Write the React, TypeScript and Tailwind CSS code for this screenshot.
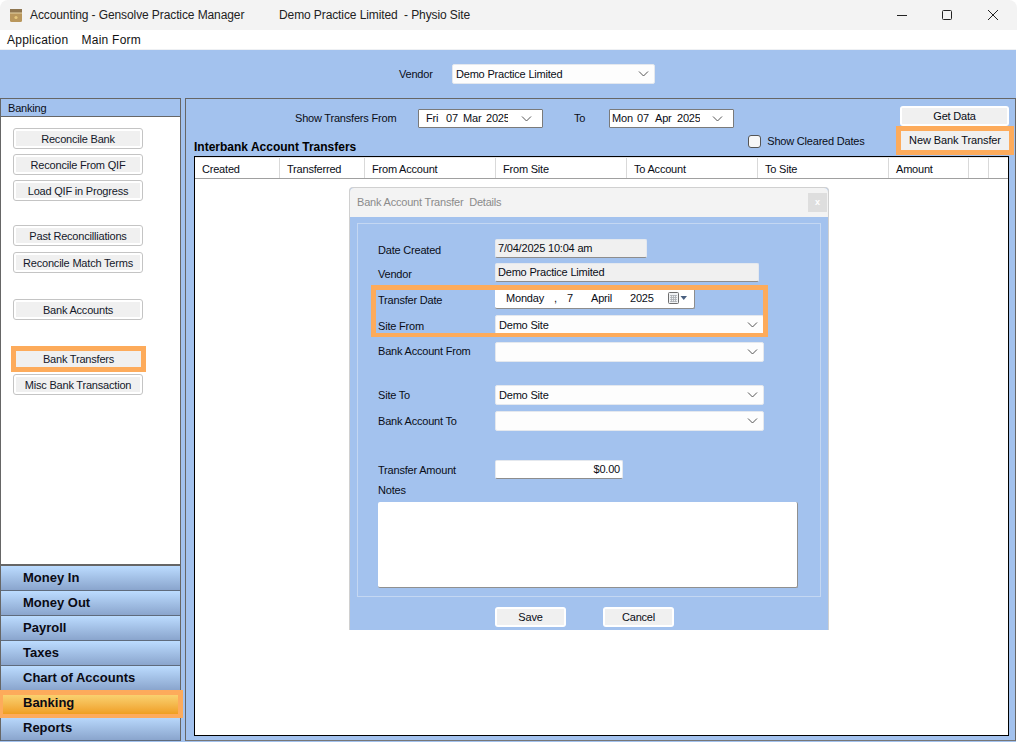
import React from "react";

const Chev = () => (
  <svg width="11" height="6" viewBox="0 0 11 6" className="shrink-0" fill="none" stroke="#555" strokeWidth="1">
    <path d="M1 0.5 L5.5 5 L10 0.5" />
  </svg>
);

const SideBtn = ({ label, mt = "" }: { label: string; mt?: string }) => (
  <div className={`w-[130px] h-[21px] ml-[12px] rounded-[3px] border border-[#c4c4c4] bg-white p-[2px] ${mt}`}>
    <div className="h-full bg-[#f0f0f0] flex items-center justify-center pt-[1px]">{label}</div>
  </div>
);

const BlueBtn = ({ label, cls = "" }: { label: string; cls?: string }) => (
  <div className={`h-[20px] rounded-[3px] bg-white p-[2px] ${cls}`}>
    <div className="h-full bg-[#f0f0f0] flex items-center justify-center">{label}</div>
  </div>
);

const Nav = ({ label, active }: { label: string; active?: boolean }) => (
  <div
    className={`h-[25px] flex items-center pl-[22px] pb-[1px] text-[13px] tracking-normal font-bold border-b border-[#5f6b7c] text-[#0a0a14] ${
      active ? "bg-gradient-to-b from-[#fbdc7c] to-[#ee9c16]" : "bg-gradient-to-b from-[#bcdcff] to-[#8aa5cd]"
    }`}
  >
    {label}
  </div>
);

const Select = ({ value, cls = "" }: { value?: string; cls?: string }) => (
  <div className={`h-[20px] bg-[#fdfdfd] border border-[#e4e8ee] rounded-[2px] flex items-center justify-between pl-[3px] pr-[5px] ${cls}`}>
    <span>{value}</span>
    <Chev />
  </div>
);

const Row = ({ label, cls = "", pt, children }: { label: string; cls?: string; pt: string; children: React.ReactNode }) => (
  <div className={`flex items-start ${cls}`}>
    <div className={`w-[117px] shrink-0 ${pt}`}>{label}</div>
    {children}
  </div>
);

const cols: [string, string][] = [
  ["Created", "w-[85px]"],
  ["Transferred", "w-[85px]"],
  ["From Account", "w-[131px]"],
  ["From Site", "w-[131px]"],
  ["To Account", "w-[131px]"],
  ["To Site", "w-[131px]"],
  ["Amount", "w-[80px]"],
  ["", "w-[20px]"],
  ["", "flex-1"],
];

export default function App() {
  return (
    <div
      className="relative w-[1017px] h-[742px] overflow-hidden bg-white flex flex-col text-[11px] leading-none text-[#0a0d16] tracking-[-0.2px]"
      style={{ fontFamily: '"Liberation Sans", Arial, sans-serif' }}
    >
      {/* title bar */}
      <div className="h-[30px] bg-[#f3f3f3] rounded-t-[8px] flex items-center shrink-0 text-[#222] text-[12px] tracking-[-0.1px]">
        <svg width="14" height="15" viewBox="0 0 14 15" className="ml-[9px] mr-[7px]">
          <rect x="1" y="1" width="12" height="13" rx="1.5" fill="#b9975c" />
          <rect x="1" y="1" width="12" height="4" fill="#8f7650" />
          <rect x="1" y="4.5" width="12" height="1" fill="#e6d3a6" />
          <circle cx="7" cy="9.5" r="1.6" fill="#e5c77e" />
        </svg>
        <span className="w-[249px]">Accounting - Gensolve Practice Manager</span>
        <span>Demo Practice Limited&nbsp; - Physio Site</span>
        <div className="ml-auto flex items-center">
          <svg width="12" height="12" viewBox="0 0 12 12" className="mr-[33px]" stroke="#222" fill="none">
            <path d="M1 6.5 H11" />
          </svg>
          <svg width="12" height="12" viewBox="0 0 12 12" className="mr-[34px]" stroke="#222" fill="none">
            <rect x="1.5" y="1.5" width="9" height="9" rx="1" />
          </svg>
          <svg width="12" height="12" viewBox="0 0 12 12" className="mr-[18px]" stroke="#222" fill="none">
            <path d="M1 1 L11 11 M11 1 L1 11" />
          </svg>
        </div>
      </div>

      {/* menu */}
      <div className="h-[19px] flex items-center shrink-0 pl-[7px] gap-[13px] text-[#111] text-[12px] tracking-[0.25px]">
        <span>Application</span>
        <span>Main Form</span>
      </div>
      <div className="h-px bg-[#eef0f3] shrink-0 mr-px" />

      {/* vendor band */}
      <div className="h-[48px] bg-[#a3c2ee] flex items-center shrink-0 mr-px">
        <span className="ml-[399px] w-[53px]">Vendor</span>
        <Select value="Demo Practice Limited" cls="w-[203px]" />
      </div>

      {/* body */}
      <div className="flex-1 flex bg-[#a3c2ee] mr-px pb-px min-h-0">
        {/* left panel */}
        <div className="w-[181px] shrink-0 border border-[#666] border-b-0 flex flex-col">
          <div className="h-[18px] border-b border-[#666] bg-[#a3c2ee] flex items-center pl-[7px] pt-[1px] shrink-0">Banking</div>
          <div className="flex-1 bg-white flex flex-col pt-[11px] text-[#14182a]">
            <SideBtn label="Reconcile Bank" />
            <SideBtn label="Reconcile From QIF" mt="mt-[5px]" />
            <SideBtn label="Load QIF in Progress" mt="mt-[5px]" />
            <SideBtn label="Past Reconcilliations" mt="mt-[24px]" />
            <SideBtn label="Reconcile Match Terms" mt="mt-[6px]" />
            <SideBtn label="Bank Accounts" mt="mt-[26px]" />
            <div className="w-[135px] h-[26px] ml-[10px] mt-[26px] border-[5px] border-[#fdab5b] bg-[#f0f0f0] flex items-center justify-center">
              Bank Transfers
            </div>
            <SideBtn label="Misc Bank Transaction" mt="mt-[2px]" />
          </div>
          <div className="shrink-0 border-t-[2px] border-[#666]">
            {["Money In", "Money Out", "Payroll", "Taxes", "Chart of Accounts"].map((l) => (
              <Nav key={l} label={l} />
            ))}
            <Nav label="Banking" active />
            <Nav label="Reports" />
          </div>
        </div>

        {/* main panel */}
        <div className="ml-[4px] flex-1 border border-[#666] border-b-[#777] flex flex-col min-w-0 pr-[6px] pl-[8px]">
          <div className="h-[57px] shrink-0 relative flex flex-col">
            <div className="flex items-center mt-[10px] h-[19px]">
              <span className="ml-[101px] w-[123px]">Show Transfers From</span>
              <div className="w-[125px] h-[19px] bg-white border border-[#7a7a7a] flex items-center pl-[7px] pr-[10px] rounded-[1px]">
                <span className="w-[20px]">Fri</span>
                <span className="w-[17px]">07</span>
                <span className="w-[23px]">Mar</span>
                <span className="w-[22px] overflow-hidden">2025</span>
                <span className="ml-auto"><Chev /></span>
              </div>
              <span className="ml-[31px] w-[35px]">To</span>
              <div className="w-[125px] h-[19px] bg-white border border-[#7a7a7a] flex items-center pl-[2px] pr-[10px] rounded-[1px]">
                <span className="w-[25px]">Mon</span>
                <span className="w-[18px]">07</span>
                <span className="w-[22px]">Apr</span>
                <span className="w-[23px] overflow-hidden">2025</span>
                <span className="ml-auto"><Chev /></span>
              </div>
              <BlueBtn label="Get Data" cls="ml-auto w-[109px] mt-[-5px]" />
            </div>
            <div className="flex items-end flex-1 pb-[3px]">
              <span className="font-bold text-[12px] tracking-normal text-[#000]">Interbank Account Transfers</span>
              <div className="ml-[392px] mb-[5px] w-[13px] h-[13px] rounded-[3px] border border-[#555] bg-[#f7f7f7]" />
              <span className="ml-[6px] mb-[6px]">Show Cleared Dates</span>
            </div>
            {/* highlighted button over the toolbar */}
            <div className="absolute right-[-5px] top-[27px] w-[118px] h-[29px] border-[5px] border-[#fdab5b] bg-[#f0f0f0] flex items-center justify-center tracking-[-0.1px]">
              New Bank Transfer
            </div>
          </div>

          {/* table */}
          <div className="flex-1 bg-white border border-black flex flex-col mb-[4px] min-h-0">
            <div className="h-[22px] flex shrink-0 border-b border-[#a0a0a0] border-t border-t-[#e8e8e8]">
              {cols.map(([t, w], i) => (
                <div key={i} className={`${w} flex items-center pl-[7px] pt-[2px] border-r border-[#d9d9d9] last:border-r-0`}>
                  {t}
                </div>
              ))}
            </div>
          </div>
        </div>
      </div>

      {/* dialog */}
      <div className="absolute left-[349px] top-[187px] w-[480px] h-[443px] flex flex-col bg-[#a3c2ee] rounded-t-[4px] border-t border-x border-[#d0d0d0] border-b-0">
        <div className="h-[29px] shrink-0 bg-[#f3f3f3] rounded-t-[4px] flex items-center pl-[7px] pr-[1px] pb-[1px] justify-between text-[#8b8b8b]">
          <span>Bank Account Transfer&nbsp; Details</span>
          <div className="w-[19px] h-[19px] bg-[#dedede] text-white flex items-center justify-center text-[9px] font-bold">x</div>
        </div>
        <div className="mx-[7px] mt-[6px] h-[374px] border border-[#c4d7f2] pl-[20px] flex flex-col shrink-0">
          <Row label="Date Created" cls="mt-[15px]" pt="pt-[6px]">
            <div className="w-[152px] h-[19px] bg-[#f0f0f0] border border-[#e4e8ee] border-b-[#8d8d8d] flex items-center pl-[2px] rounded-[2px]">7/04/2025 10:04 am</div>
          </Row>
          <Row label="Vendor" cls="mt-[5px]" pt="pt-[6px]">
            <div className="w-[264px] h-[19px] bg-[#f0f0f0] border border-[#e4e8ee] border-b-[#8d8d8d] flex items-center pl-[2px] rounded-[2px]">Demo Practice Limited</div>
          </Row>
          <Row label="Transfer Date" cls="mt-[6px]" pt="pt-[7px]">
            <div className="w-[200px] h-[21px] bg-white border-b border-r border-[#8d8d8d] rounded-[2px] flex items-center pl-[11px] whitespace-pre">
              <span className="w-[48px]">Monday</span>
              <span className="w-[13px]">,</span>
              <span className="w-[24px]">7</span>
              <span className="w-[39px]">April</span>
              <span className="w-[38px]">2025</span>
              <svg width="24" height="14" viewBox="0 0 24 14" className="shrink-0">
                <rect x="0.5" y="1.5" width="10" height="11" rx="1" fill="#f0f2f4" stroke="#6e6e6e" />
                <path d="M2 4.5 H9 M2 6.5 H9 M2 8.5 H9 M2 10.5 H9 M3.5 4 V11 M5.5 4 V11 M7.5 4 V11" stroke="#a9adb3" strokeWidth="0.8" />
                <path d="M12.5 5 H19 L15.75 9 Z" fill="#4a6080" />
              </svg>
            </div>
          </Row>
          <Row label="Site From" cls="mt-[6px]" pt="pt-[6px]">
            <Select value="Demo Site" cls="w-[269px]" />
          </Row>
          <Row label="Bank Account From" cls="mt-[7px]" pt="pt-[4px]">
            <Select cls="w-[269px]" />
          </Row>
          <Row label="Site To" cls="mt-[23px]" pt="pt-[5px]">
            <Select value="Demo Site" cls="w-[269px]" />
          </Row>
          <Row label="Bank Account To" cls="mt-[6px]" pt="pt-[5px]">
            <Select cls="w-[269px]" />
          </Row>
          <Row label="Transfer Amount" cls="mt-[29px]" pt="pt-[5px]">
            <div className="w-[128px] h-[19px] bg-white border border-[#e4e8ee] border-b-[#8d8d8d] rounded-[2px] flex items-center justify-end pr-[2px]">$0.00</div>
          </Row>
          <div className="mt-[6px] h-[12px]">Notes</div>
          <div className="mt-[5px] w-[420px] h-[86px] bg-white border-b border-r border-[#909090] rounded-[2px]" />
        </div>
        <div className="flex pl-[145px] gap-[37px] mt-[10px]">
          <BlueBtn label="Save" cls="w-[71px]" />
          <BlueBtn label="Cancel" cls="w-[71px]" />
        </div>
      </div>

      {/* highlights lying over the form and the nav */}
      <div className="absolute left-[371px] top-[285px] w-[397px] h-[52px] border-[5px] border-b-[4px] border-[#fdab5b] pointer-events-none" />
      <div className="absolute left-0 top-[690px] w-[183px] h-[28px] border-t-[5px] border-b-[4px] border-l-[3px] border-r-[5px] border-[#fdab5b] pointer-events-none" />
    </div>
  );
}
